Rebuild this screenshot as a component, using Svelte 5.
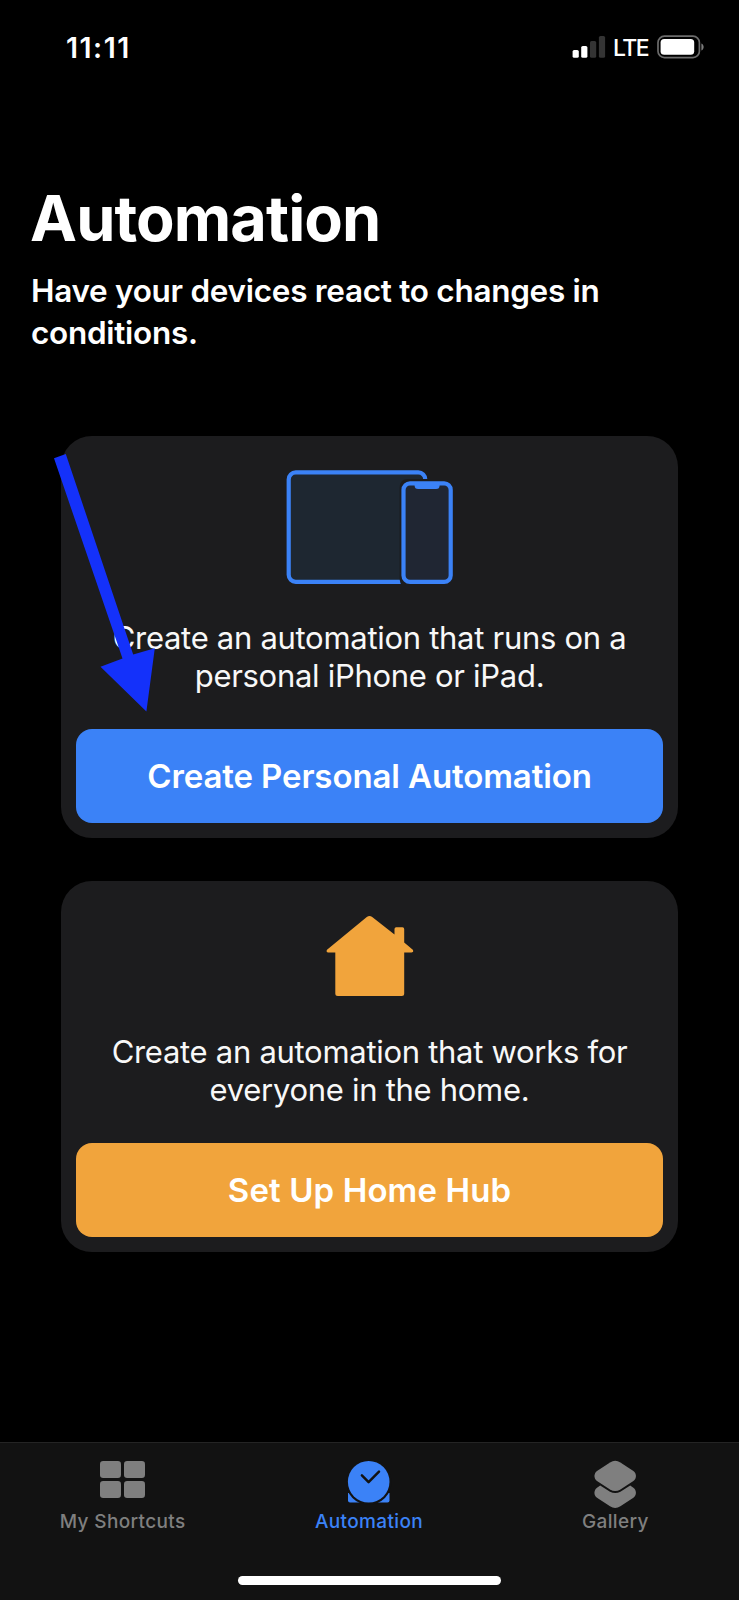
<script>
  const tabs = [
    { id: 'shortcuts', label: 'My Shortcuts' },
    { id: 'automation', label: 'Automation' },
    { id: 'gallery', label: 'Gallery' }
  ];
  let active = $state('automation');
</script>

<div class="screen">
  <header class="status">
    <span class="time">11:11</span>
    <div class="indicators">
      <svg class="signal" width="34" height="24" viewBox="0 0 34 24">
        <rect x="0.6" y="15" width="6.2" height="7.8" rx="1.6" fill="#fff" />
        <rect x="9.2" y="11" width="6.2" height="11.8" rx="1.6" fill="#fff" />
        <rect x="18" y="6" width="6.2" height="16.8" rx="1.6" fill="#343434" />
        <rect x="26.9" y="1" width="6.2" height="21.8" rx="1.6" fill="#343434" />
      </svg>
      <span class="network">LTE</span>
      <svg class="battery" width="48" height="24" viewBox="0 0 48 24">
        <rect x="1" y="1.2" width="41.4" height="21.4" rx="6.4" fill="none" stroke="#6c6c6c" stroke-width="1.7" />
        <rect x="3.6" y="4" width="33.6" height="15.8" rx="3.6" fill="#fff" />
        <path d="M44.4 8.4C47.4 9.6 47.4 14.2 44.4 15.4Z" fill="#7c7c7c" />
      </svg>
    </div>
  </header>

  <main>
    <h1>Automation</h1>
    <p class="subtitle">Have your devices react to changes in<br />conditions.</p>

    <section class="card personal">
      <svg class="devices" width="168" height="116" viewBox="0 0 168 116">
        <rect x="2.7" y="2.4" width="136.6" height="109.4" rx="7" fill="#1e2731" stroke="#3b82f7" stroke-width="4.2" />
        <path d="M113.6 108V18Q113.6 9 122 9H168V116H116.5Q113.6 113 113.6 108Z" fill="#1c1c1e" />
        <rect x="117.5" y="13.4" width="47.2" height="98.5" rx="6.5" fill="#202633" stroke="#3b82f7" stroke-width="4.2" />
        <path d="M128.6 12H153.6V15.5Q153.6 19 150.1 19H132.1Q128.6 19 128.6 15.5Z" fill="#3b82f7" />
      </svg>
      <p>Create an automation that runs on a<br />personal iPhone or iPad.</p>
      <button class="blue">Create Personal Automation</button>
      <svg class="pointer" width="104" height="260" viewBox="0 0 104 260">
        <path d="M0 4.3L11.8 0L79.2 200.6L100.8 194.2L92.4 257.5L46.5 212.8L68.500 204.6Z" fill="#1431fa" />
      </svg>
    </section>

    <section class="card home">
      <svg class="house" width="88" height="80" viewBox="0 0 88 80">
        <g transform="translate(-0.5 0)">
          <path d="M41.3 1Q44 -1 46.7 1L69 18.5V13Q69 11.3 70.7 11.3H77Q78.7 11.3 78.7 13V26.5L87.3 33.8Q88.6 36.2 86 36.4H78.7V77.5Q78.7 80 76.2 80H12.3Q9.8 80 9.8 77.5V36.4H2.500Q0.300 36.2 1.500 33.8Z" fill="#f1a43c" />
        </g>
      </svg>
      <p>Create an automation that works for<br />everyone in the home.</p>
      <button class="orange">Set Up Home Hub</button>
    </section>
  </main>

  <nav>
    <div class="tabs">
      {#each tabs as tab (tab.id)}
        <button class="tab" class:active={active === tab.id} onclick={() => (active = tab.id)}>
          <svg width="48" height="50" viewBox="0 0 48 50" fill="currentColor">
            {#if tab.id === 'shortcuts'}
              <rect x="1" y="1" width="21" height="17" rx="3.2" />
              <rect x="25" y="1" width="21" height="17" rx="3.2" />
              <rect x="1" y="21" width="21" height="17" rx="3.2" />
              <rect x="25" y="21" width="21" height="17" rx="3.2" />
            {:else if tab.id === 'automation'}
              <path d="M3 33V40.5Q3 42.5 5 42.5H42.5Q44.5 42.5 44.5 40.5V33Z" />
              <circle cx="23.7" cy="21.7" r="23" fill="#121212" />
              <circle cx="23.7" cy="21.7" r="20.8" />
              <path d="M16.9 15.4L23.6 22.1L34 11.7" fill="none" stroke="#121212" stroke-width="2.5" stroke-linecap="round" stroke-linejoin="round" />
            {:else}
              <path d="M8.2 25.4L5 27.700C1.600 30.500 1.600 35 5 37.700L18 46.200Q23.200 49.600 28.400 46.200L41.400 37.700C44.800 35 44.800 30.500 41.400 27.700L38.200 25.400L28.400 31.800Q23.200 34.400 18 31.800Z" />
              <path d="M18 2.400Q23.200 -0.900 28.400 2.400L41.400 11C44.800 13.800 44.800 18.200 41.400 21L28.400 29.500Q23.200 32.700 18 29.500L5 21C1.600 18.200 1.600 13.800 5 11Z" />
            {/if}
          </svg>
          <span>{tab.label}</span>
        </button>
      {/each}
    </div>
    <div class="home-indicator"></div>
  </nav>
</div>

<style>
  :global(body) {
    background: #000;
  }
  .screen {
    box-sizing: border-box;
    width: 739px;
    height: 1600px;
    display: flex;
    flex-direction: column;
    background: #000;
    color: #fff;
    font-family: Inter, "Liberation Sans", sans-serif;
    overflow: hidden;
  }
  .status {
    height: 60px;
    padding: 30px 34px 0 66px;
    display: flex;
    justify-content: space-between;
    box-sizing: border-box;
    margin-bottom: 120px;
  }
  .time {
    font-size: 28.5px;
    line-height: 35px;
    font-weight: 600;
    letter-spacing: 1.5px;
  }
  .indicators {
    display: flex;
    align-items: flex-start;
    height: 30px;
    padding-top: 5px;
    box-sizing: border-box;
  }
  .network {
    font-size: 23px;
    line-height: 27px;
    font-weight: 500;
    margin: 0 10.5px 0 7px;
    width: 33.5px;
    letter-spacing: -1.5px;
  }
  main {
    flex: 1;
  }
  h1 {
    margin: 0 0 14px 30px;
    font-size: 63px;
    line-height: 76px;
    font-weight: 700;
    letter-spacing: -0.9px;
  }
  p {
    margin: 0;
    white-space: nowrap;
  }
  .subtitle {
    margin-left: 31px;
    font-size: 31.5px;
    line-height: 41.7px;
    font-weight: 600;
    letter-spacing: -0.29px;
    height: 166px;
  }
  .card {
    box-sizing: border-box;
    position: relative;
    width: 617px;
    margin-left: 61px;
    padding: 0 15px;
    border-radius: 31px;
    background: #1c1c1e;
    display: flex;
    flex-direction: column;
    align-items: center;
  }
  .personal {
    height: 402px;
    padding-top: 34px;
    margin-bottom: 42.5px;
  }
  .home {
    height: 371.5px;
    padding-top: 35.5px;
  }
  .devices {
    margin-bottom: 32.5px;
  }
  .house {
    margin-bottom: 36.5px;
  }
  .card p {
    font-size: 31px;
    line-height: 38px;
    text-align: center;
    letter-spacing: -0.29px;
    color: #f8f8f8;
  }
  .card button {
    width: 587px;
    height: 94px;
    margin: 34.5px 0 0;
    padding: 0;
    border: 0;
    border-radius: 16px;
    color: #fff;
    font: 600 33px/40px Inter, "Liberation Sans", sans-serif;
    letter-spacing: -0.11px;
  }
  .blue {
    background: #3b82f7;
  }
  .card .orange {
    background: #f1a43c;
    letter-spacing: 0.1px;
  }
  .pointer {
    position: absolute;
    left: -7.5px;
    top: 18px;
  }
  nav {
    box-sizing: border-box;
    height: 158px;
    padding: 17px 0 15px;
    border-top: 1px solid #242424;
    background: #121212;
    display: flex;
    flex-direction: column;
    justify-content: space-between;
    align-items: center;
  }
  .tabs {
    width: 100%;
    display: grid;
    grid-template-columns: repeat(3, 1fr);
  }
  .tab {
    display: flex;
    flex-direction: column;
    align-items: center;
    padding: 0;
    border: 0;
    background: none;
    color: #7f7f7f;
    font: 500 19px/24px Inter, "Liberation Sans", sans-serif;
    letter-spacing: 0.35px;
  }
  .tab.active {
    color: #3b82f7;
  }
  .tab span {
    margin-right: 1px;
  }
  .home-indicator {
    width: 263px;
    height: 9px;
    border-radius: 5px;
    background: #fff;
  }
</style>
